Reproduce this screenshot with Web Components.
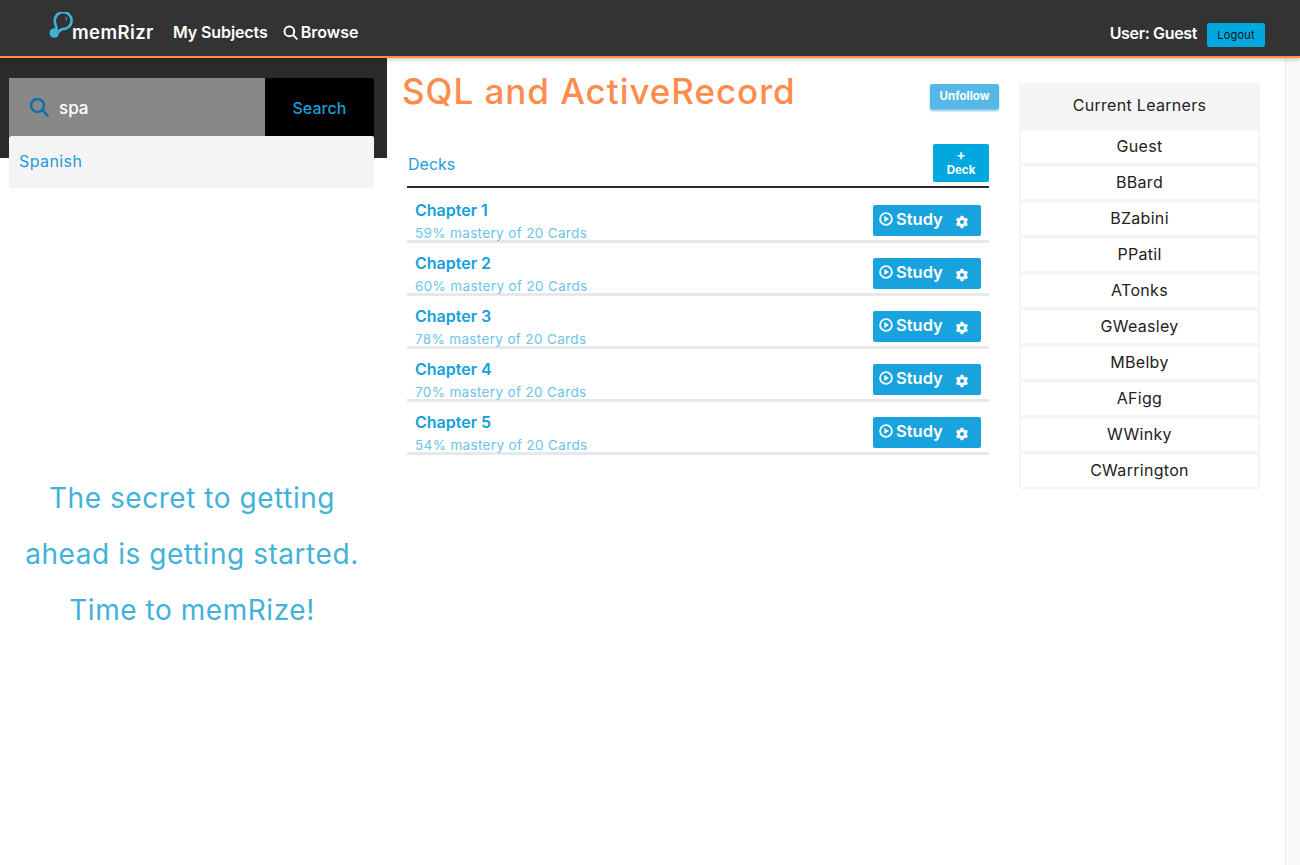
<!DOCTYPE html>
<html><head><meta charset="utf-8"><title>memRizr</title>
<style>
html,body{margin:0;height:100%;overflow:hidden}
body{font-family:Inter,"Liberation Sans",sans-serif;background:#fff}
</style></head><body>
<app-shell>
  <top-bar slot="bar"></top-bar>
  <side-panel slot="side"></side-panel>
  <subject-main slot="main"></subject-main>
  <learner-list slot="right" names="Guest,BBard,BZabini,PPatil,ATonks,GWeasley,MBelby,AFigg,WWinky,CWarrington"></learner-list>
</app-shell>
<script>
const FONT='Inter,"Liberation Sans",sans-serif';
const searchIcon=(s,c,w)=>`<svg width="${s}" height="${s}" viewBox="0 0 20 20" fill="none" stroke="${c}" stroke-width="${w}" stroke-linecap="round"><circle cx="8.5" cy="8.5" r="6.500"/><path d="M13.400 13.400 18.500 18.500"/></svg>`;
function def(name,html){
  customElements.define(name,class extends HTMLElement{
    constructor(){super();this.attachShadow({mode:'open'});}
    connectedCallback(){this.shadowRoot.innerHTML=typeof html==='function'?html(this):html;}
  });
}
def('app-shell',`<style>
:host{display:flex;flex-direction:column;height:865px;width:1300px;font-family:${FONT}}
.body{flex:1;display:flex;min-height:0}
.gutter{width:14px;margin-left:auto;border-left:1px solid #e9e9e9;background:#fafafa}
::slotted([slot=main]){margin-left:15px}
::slotted([slot=right]){margin-left:20px}
</style>
<slot name="bar"></slot>
<div class="body"><slot name="side"></slot><slot name="main"></slot><slot name="right"></slot><div class="gutter"></div></div>`);

def('top-bar',`<style>
:host{display:flex;align-items:flex-start;height:56px;background:#333;border-bottom:2px solid #ff8c4d;box-shadow:0 2px 4px rgba(0,0,0,.2);position:relative;z-index:2;color:#fff;font-weight:600;font-size:16px;letter-spacing:-.1px}
.logo{display:flex;margin-left:49px;margin-top:12px;width:124px}
.logo svg{display:block;flex:none}
.logo span{font-size:18.500px;margin-left:-2px;margin-top:9px;line-height:22px;letter-spacing:.4px}
.nav{display:flex;align-items:center;height:22px;margin-top:21px;line-height:22px}
.nav .b{display:flex;align-items:center;gap:3px;margin-left:15px;letter-spacing:0}
.right{margin-left:auto;display:flex;align-items:flex-start;margin-top:23px;margin-right:35px}
.right .u{margin-top:-1px;line-height:22px;letter-spacing:-.35px}
.logout{margin-left:10px;width:58px;height:24px;background:#00a8e0;border-radius:2px;color:#111;font-size:11px;font-weight:400;display:flex;align-items:center;justify-content:center;letter-spacing:.2px}
</style>
<div class="logo"><svg width="25" height="27" viewBox="0 0 25 27" fill="none"><path d="M7.500 17.500C8 15 5.800 13 5.800 8.800A8.400 8.400 0 1 1 14 17C11.500 17.300 10.500 18.500 9.500 20.500" stroke="#3fb0d8" stroke-width="2.700"/><circle cx="5.300" cy="21" r="4.800" fill="#3fb0d8"/><path d="M16.500 5q1.200 1.500 1 3.500" stroke="#3fb0d8" stroke-width="1"/></svg><span>memRizr</span></div>
<div class="nav"><span>My Subjects</span><span class="b">${searchIcon(15,'#fff',2.600)}Browse</span></div>
<div class="right"><span class="u">User: Guest</span><span class="logout">Logout</span></div>`);

def('side-panel',`<style>
:host{display:block;width:387px;flex:none}
.dark{height:100px;background:#2b2b2b;box-sizing:border-box;padding:20px 13px 0 9px}
.search{display:flex;height:58px}
.field{flex:1;background:#888;display:flex;align-items:center;padding:2px 0 0 20px;color:#fff;font-size:17px;font-weight:500;gap:10px}
.field svg{margin-top:-2px}
.btn{width:109px;background:#000;color:#1a9fd8;font-size:16px;font-weight:500;display:flex;align-items:center;justify-content:center;border-radius:0 2px 0 0;padding-top:2px;box-sizing:border-box;letter-spacing:.05px}
.drop{height:52px;background:#f4f4f4;border-radius:2px;display:flex;align-items:center;box-sizing:border-box;padding:0 0 2px 10px;color:#1f9cdb;font-size:16px;letter-spacing:.4px;position:relative}
.quote{margin-top:312px;padding:0 12px 0 9px;text-align:center;color:#42b2d9;font-size:28px;line-height:56px;letter-spacing:.55px}
</style>
<div class="dark"><div class="search"><div class="field">${searchIcon(20,'#0b72a8',2.600)}<span>spa</span></div><div class="btn">Search</div></div><div class="drop">Spanish</div></div>
<div class="quote">The secret to getting<br>ahead is getting started.<br>Time to memRize!</div>`);

def('deck-row',h=>`<style>
:host{display:flex;height:53px;box-sizing:border-box;border-bottom:3px solid #e8e8e8;padding-left:8px;justify-content:space-between}
.t{color:#15a0dc;font-size:16px;font-weight:600;line-height:20px;margin-top:10px}
.s{color:#6cc3ea;font-size:13.500px;line-height:18px;margin-top:4px;white-space:nowrap;letter-spacing:.35px}
.study{width:108px;height:31px;margin:15px 8px 0 0;background:#18a2de;border-radius:2px;color:#fff;font-size:16.500px;font-weight:600;display:flex;align-items:center;box-sizing:border-box;padding:0 0 4px 6px;flex:none}
.study svg.p{margin-right:3px}
.study svg.g{margin-left:auto;margin-right:12px;margin-top:6px}
</style>
<div><div class="t">${h.getAttribute('name')}</div><div class="s">${h.getAttribute('info')}</div></div>
<div class="study"><svg class="p" width="14" height="14" viewBox="0 0 14 14"><circle cx="7" cy="7" r="5.900" fill="none" stroke="#fff" stroke-width="1.800"/><path d="M5.300 4v6L10 7z" fill="#fff"/></svg>Study<svg class="g" width="14" height="14" viewBox="0 0 14 14"><g fill="#fff"><circle cx="7" cy="7" r="4.800"/><rect x="5.500" y=".8" width="3" height="12.400" rx=".6"/><rect x="5.500" y=".8" width="3" height="12.400" rx=".6" transform="rotate(60 7 7)"/><rect x="5.500" y=".8" width="3" height="12.400" rx=".6" transform="rotate(120 7 7)"/></g><circle cx="7" cy="7" r="2" fill="#18a2de"/></svg></div>`);

def('subject-main',`<style>
:host{display:block;width:597px;flex:none}
.head{display:flex;justify-content:space-between;height:86px}
h1{margin:14px 0 0;font-size:35px;line-height:38px;font-weight:500;color:#ff8c4d;letter-spacing:.95px;white-space:nowrap}
.unf{width:69px;height:25px;margin-top:26px;background:#55b8e6;border-radius:2px;color:#fff;font-size:11.500px;font-weight:700;display:flex;align-items:center;justify-content:center;box-shadow:0 2px 2px rgba(20,150,215,.55);box-sizing:border-box;padding-bottom:2px}
.wrap{margin-left:5px;width:582px}
.bar{display:flex;justify-content:space-between;height:42px;border-bottom:2px solid #2b2b2b;margin-bottom:2px}
.d{color:#1f9cdb;font-size:16px;align-self:center;margin-top:-2px;margin-left:1px}
.add{width:56px;height:38px;background:#00a8e0;border-radius:2px;color:#fff;font-size:11.500px;font-weight:700;text-align:center;box-sizing:border-box;padding-top:4px}
.add b{display:block;font-size:14px;font-weight:600;line-height:14px}
.add span{display:block;line-height:13px;margin-top:2px}
</style>
<div class="head"><h1>SQL and ActiveRecord</h1><div class="unf">Unfollow</div></div>
<div class="wrap"><div class="bar"><span class="d">Decks</span><div class="add"><b>+</b><span>Deck</span></div></div>
<deck-row name="Chapter 1" info="59% mastery of 20 Cards"></deck-row>
<deck-row name="Chapter 2" info="60% mastery of 20 Cards"></deck-row>
<deck-row name="Chapter 3" info="78% mastery of 20 Cards"></deck-row>
<deck-row name="Chapter 4" info="70% mastery of 20 Cards"></deck-row>
<deck-row name="Chapter 5" info="54% mastery of 20 Cards"></deck-row></div>`);

def('learner-list',h=>`<style>
:host{display:block;width:241px;height:406px;margin-top:25px;background:#f5f5f5;box-sizing:border-box;flex:none;color:#222;text-align:center;font-size:16px;letter-spacing:.3px}
.h{height:48px;line-height:45px}
.i{height:32px;line-height:31px;background:#fff;margin:0 2px 4px}
</style>
<div class="h">Current Learners</div>${h.getAttribute('names').split(',').map(n=>`<div class="i">${n}</div>`).join('')}`);
</script></body></html>
